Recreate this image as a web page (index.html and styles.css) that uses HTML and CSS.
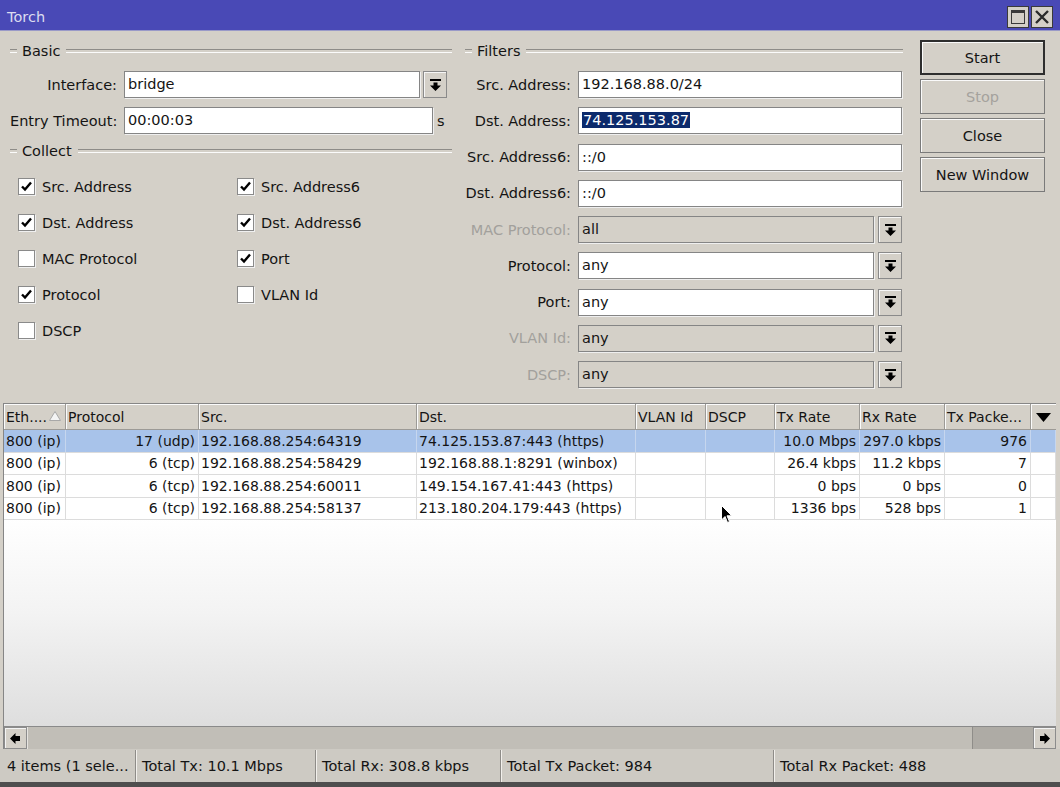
FILE: index.html
```html
<!DOCTYPE html>
<html>
<head>
<meta charset="utf-8">
<title>Torch</title>
<link rel="stylesheet" href="styles.css">
</head>
<body>
<div class="window">
  <div class="titlebar">
    <span class="title">Torch</span>
    <div class="tb-btns">
      <span class="tb-btn"><span class="max-box"></span></span>
      <span class="tb-btn"><svg width="16" height="16" viewBox="0 0 16 16"><path d="M2 2 L14 14 M14 2 L2 14" stroke="#2a2a2a" stroke-width="2.4" fill="none"/></svg></span>
    </div>
  </div>

  <div class="top">
    <div class="col-basic">
      <div class="group-head"><span class="gh-text">Basic</span></div>
      <div class="frow">
        <label class="lbl">Interface:</label>
        <div class="input w-iface">bridge</div>
        <div class="dd"><svg width="11" height="12" viewBox="0 0 11 12"><rect x="0" y="0" width="11" height="2" fill="#000"/><polygon points="3.5,3.5 7.5,3.5 7.5,6.5 11,6.5 5.5,12 0,6.5 3.5,6.5" fill="#000"/></svg></div>
      </div>
      <div class="frow">
        <label class="lbl">Entry Timeout:</label>
        <div class="input w-timeout">00:00:03</div>
        <span class="unit">s</span>
      </div>
      <div class="group-head collect"><span class="gh-text">Collect</span></div>
      <div class="checks">
        <div class="chk"><span class="box"><svg width="15" height="15" viewBox="0 0 15 15"><polyline points="3,7.5 6,10.5 12,3.5" fill="none" stroke="#000" stroke-width="2.4"/></svg></span>Src. Address</div>
        <div class="chk"><span class="box"><svg width="15" height="15" viewBox="0 0 15 15"><polyline points="3,7.5 6,10.5 12,3.5" fill="none" stroke="#000" stroke-width="2.4"/></svg></span>Src. Address6</div>
        <div class="chk"><span class="box"><svg width="15" height="15" viewBox="0 0 15 15"><polyline points="3,7.5 6,10.5 12,3.5" fill="none" stroke="#000" stroke-width="2.4"/></svg></span>Dst. Address</div>
        <div class="chk"><span class="box"><svg width="15" height="15" viewBox="0 0 15 15"><polyline points="3,7.5 6,10.5 12,3.5" fill="none" stroke="#000" stroke-width="2.4"/></svg></span>Dst. Address6</div>
        <div class="chk"><span class="box"></span>MAC Protocol</div>
        <div class="chk"><span class="box"><svg width="15" height="15" viewBox="0 0 15 15"><polyline points="3,7.5 6,10.5 12,3.5" fill="none" stroke="#000" stroke-width="2.4"/></svg></span>Port</div>
        <div class="chk"><span class="box"><svg width="15" height="15" viewBox="0 0 15 15"><polyline points="3,7.5 6,10.5 12,3.5" fill="none" stroke="#000" stroke-width="2.4"/></svg></span>Protocol</div>
        <div class="chk"><span class="box"></span>VLAN Id</div>
        <div class="chk"><span class="box"></span>DSCP</div>
      </div>
    </div>

    <div class="col-filters">
      <div class="group-head"><span class="gh-text">Filters</span></div>
      <div class="frow">
        <label class="lbl">Src. Address:</label>
        <div class="input w-full">192.168.88.0/24</div>
      </div>
      <div class="frow">
        <label class="lbl">Dst. Address:</label>
        <div class="input w-full"><span class="sel">74.125.153.87</span></div>
      </div>
      <div class="frow">
        <label class="lbl">Src. Address6:</label>
        <div class="input w-full">::/0</div>
      </div>
      <div class="frow">
        <label class="lbl">Dst. Address6:</label>
        <div class="input w-full">::/0</div>
      </div>
      <div class="frow">
        <label class="lbl disabled">MAC Protocol:</label>
        <div class="input w-combo off">all</div>
        <div class="dd wide"><svg width="11" height="12" viewBox="0 0 11 12"><rect x="0" y="0" width="11" height="2" fill="#000"/><polygon points="3.5,3.5 7.5,3.5 7.5,6.5 11,6.5 5.5,12 0,6.5 3.5,6.5" fill="#000"/></svg></div>
      </div>
      <div class="frow">
        <label class="lbl">Protocol:</label>
        <div class="input w-combo">any</div>
        <div class="dd wide"><svg width="11" height="12" viewBox="0 0 11 12"><rect x="0" y="0" width="11" height="2" fill="#000"/><polygon points="3.5,3.5 7.5,3.5 7.5,6.5 11,6.5 5.5,12 0,6.5 3.5,6.5" fill="#000"/></svg></div>
      </div>
      <div class="frow">
        <label class="lbl">Port:</label>
        <div class="input w-combo">any</div>
        <div class="dd wide"><svg width="11" height="12" viewBox="0 0 11 12"><rect x="0" y="0" width="11" height="2" fill="#000"/><polygon points="3.5,3.5 7.5,3.5 7.5,6.5 11,6.5 5.5,12 0,6.5 3.5,6.5" fill="#000"/></svg></div>
      </div>
      <div class="frow">
        <label class="lbl disabled">VLAN Id:</label>
        <div class="input w-combo off">any</div>
        <div class="dd wide"><svg width="11" height="12" viewBox="0 0 11 12"><rect x="0" y="0" width="11" height="2" fill="#000"/><polygon points="3.5,3.5 7.5,3.5 7.5,6.5 11,6.5 5.5,12 0,6.5 3.5,6.5" fill="#000"/></svg></div>
      </div>
      <div class="frow">
        <label class="lbl disabled">DSCP:</label>
        <div class="input w-combo off">any</div>
        <div class="dd wide"><svg width="11" height="12" viewBox="0 0 11 12"><rect x="0" y="0" width="11" height="2" fill="#000"/><polygon points="3.5,3.5 7.5,3.5 7.5,6.5 11,6.5 5.5,12 0,6.5 3.5,6.5" fill="#000"/></svg></div>
      </div>
    </div>

    <div class="col-buttons">
      <div class="btn default">Start</div>
      <div class="btn disabled">Stop</div>
      <div class="btn">Close</div>
      <div class="btn">New Window</div>
    </div>
  </div>

  <div class="grid-frame">
    <div class="grid-body">
      <table class="grid">
        <colgroup>
          <col class="c-eth"><col class="c-proto"><col class="c-src"><col class="c-dst"><col class="c-vlan"><col class="c-dscp"><col class="c-tx"><col class="c-rx"><col class="c-txp"><col class="c-menu">
        </colgroup>
        <thead>
          <tr>
            <th>Eth....<svg class="sort" width="12" height="10" viewBox="0 0 12 10"><polygon points="6,0.5 11.5,9.5 0.5,9.5" fill="#f4f4f4" stroke="#a8a8a8" stroke-width="1"/></svg></th>
            <th>Protocol</th>
            <th>Src.</th>
            <th>Dst.</th>
            <th>VLAN Id</th>
            <th>DSCP</th>
            <th>Tx Rate</th>
            <th>Rx Rate</th>
            <th>Tx Packe...</th>
            <th class="menu"><svg width="15" height="9" viewBox="0 0 15 9"><polygon points="0,0 15,0 7.5,9" fill="#000"/></svg></th>
          </tr>
        </thead>
        <tbody>
          <tr class="selected">
            <td>800 (ip)</td><td class="r">17 (udp)</td><td>192.168.88.254:64319</td><td>74.125.153.87:443 (https)</td><td></td><td></td><td class="r">10.0 Mbps</td><td class="r">297.0 kbps</td><td class="r">976</td><td></td>
          </tr>
          <tr>
            <td>800 (ip)</td><td class="r">6 (tcp)</td><td>192.168.88.254:58429</td><td>192.168.88.1:8291 (winbox)</td><td></td><td></td><td class="r">26.4 kbps</td><td class="r">11.2 kbps</td><td class="r">7</td><td></td>
          </tr>
          <tr>
            <td>800 (ip)</td><td class="r">6 (tcp)</td><td>192.168.88.254:60011</td><td>149.154.167.41:443 (https)</td><td></td><td></td><td class="r">0 bps</td><td class="r">0 bps</td><td class="r">0</td><td></td>
          </tr>
          <tr>
            <td>800 (ip)</td><td class="r">6 (tcp)</td><td>192.168.88.254:58137</td><td>213.180.204.179:443 (https)</td><td></td><td></td><td class="r">1336 bps</td><td class="r">528 bps</td><td class="r">1</td><td></td>
          </tr>
        </tbody>
      </table>
    </div>
    <div class="hscroll">
      <div class="sb-btn"><svg width="11" height="11" viewBox="0 0 11 11"><polygon points="0,5.5 5.5,0 5.5,3 10,3 10,8 5.5,8 5.5,11" fill="#000"/></svg></div>
      <div class="sb-thumb"></div>
      <div class="sb-track"></div>
      <div class="sb-btn"><svg width="11" height="11" viewBox="0 0 11 11"><polygon points="11,5.5 5.5,0 5.5,3 1,3 1,8 5.5,8 5.5,11" fill="#000"/></svg></div>
    </div>
  </div>

  <div class="status">
    <div class="st st1">4 items (1 sele...</div>
    <div class="st st2">Total Tx: 10.1 Mbps</div>
    <div class="st st3">Total Rx: 308.8 kbps</div>
    <div class="st st4">Total Tx Packet: 984</div>
    <div class="st st5">Total Rx Packet: 488</div>
  </div>

  <svg class="cursor" width="12" height="19" viewBox="0 0 12 19"><path d="M0.5 0.5 L0.5 15 L4 11.5 L6.5 17.5 L8.5 16.6 L6 10.8 L10.8 10.8 Z" fill="#000" stroke="#fff" stroke-width="1"/></svg>
</div>
</body>
</html>
```

FILE: styles.css
```css
* { box-sizing: border-box; }
html, body { margin: 0; padding: 0; }
body {
  width: 1060px;
  height: 787px;
  overflow: hidden;
  background: #d4d0c8;
  font-family: "DejaVu Sans", Verdana, sans-serif;
  font-size: 14.5px;
  color: #141414;
}
.window {
  position: relative;
  width: 1060px;
  height: 787px;
  display: flex;
  flex-direction: column;
  background: #d4d0c8;
  border-bottom: 5px solid #4e4e4e;
}

/* title bar */
.titlebar {
  flex: none;
  height: 31px;
  background: #4949b6;
  display: flex;
  align-items: center;
  justify-content: space-between;
  padding: 4px 7px 0 7px;
  border-bottom: 1px solid #9a9ac8;
}
.title { color: #dcdcf0; font-size: 14.5px; }
.tb-btns { display: flex; gap: 2px; }
.tb-btn {
  width: 22px;
  height: 22px;
  background: #d4d0c8;
  border: 1px solid #3a3a3a;
  display: flex;
  align-items: center;
  justify-content: center;
}
.max-box {
  width: 14px;
  height: 14px;
  border: 1.5px solid #3a3a3a;
  border-top-width: 3px;
}

/* top form area */
.top {
  flex: none;
  height: 372px;
  display: flex;
  padding-top: 10px;
}
.col-basic { width: 455px; padding: 0 3px 0 10px; }
.col-filters { width: 450px; padding: 0 2px 0 10px; }
.col-buttons {
  padding-left: 15px;
  margin-top: -1px;
  display: flex;
  flex-direction: column;
  gap: 4px;
}

.group-head {
  display: flex;
  align-items: center;
  height: 20px;
  margin-bottom: 10px;
}
.group-head::before,
.group-head::after {
  content: "";
  height: 2px;
  border-top: 1px solid #8e8c88;
  border-bottom: 1px solid #fbfbfb;
}
.group-head::before { width: 7px; }
.group-head::after { flex: 1; }
.gh-text { padding: 0 6px 0 5px; }
.group-head.collect { margin-top: -3px; margin-bottom: 8px; }

.frow {
  display: flex;
  align-items: center;
  height: 27px;
  margin-bottom: 9.25px;
}
.col-basic .lbl { width: 107px; }
.col-filters .lbl { width: 106px; }
.lbl {
  text-align: right;
  margin-right: 7px;
  white-space: nowrap;
}
.lbl.disabled { color: #a2a09c; }

.input {
  height: 27px;
  background: #fff;
  border: 1px solid #858585;
  box-shadow: 1px 1px 0 #efefef;
  padding-left: 3px;
  line-height: 25px;
  white-space: nowrap;
}
.input.off { background: #d4d0c8; }
.w-iface { width: 296px; }
.w-timeout { width: 309px; }
.w-full { width: 324px; }
.w-combo { width: 296px; }
.unit { margin-left: 4px; }
.sel { background: #0c2a6c; color: #fff; padding: 0 1px; }

.dd {
  width: 24px;
  height: 27px;
  margin-left: 3px;
  background: #d4d0c8;
  border: 1px solid #8a8a8a;
  box-shadow: inset 1px 1px 0 #f6f6f6;
  display: flex;
  align-items: center;
  justify-content: center;
}
.dd.wide { margin-left: 4px; }

.checks {
  display: grid;
  grid-template-columns: 219px 1fr;
  padding-left: 8px;
}
.chk {
  height: 36px;
  display: flex;
  align-items: center;
}
.box {
  width: 17px;
  height: 17px;
  background: #fff;
  border: 1px solid #8a8a8a;
  box-shadow: 1px 1px 0 #f0f0f0;
  margin-right: 7px;
  display: flex;
  align-items: center;
  justify-content: center;
}

.btn {
  width: 125px;
  height: 35px;
  background: #d4d0c8;
  border: 1px solid #7a7a7a;
  box-shadow: inset 1px 1px 0 #fafafa;
  display: flex;
  align-items: center;
  justify-content: center;
}
.btn.default { border: 2px solid #2e2e2e; box-shadow: inset 1px 1px 0 #fafafa; }
.btn.disabled { color: #a5a29d; }

/* grid */
.grid-frame {
  flex: 1;
  display: flex;
  flex-direction: column;
  margin: 0 4px 0 3px;
  border-top: 1px solid #868686;
  border-left: 1px solid #868686;
  min-height: 0;
}
.grid-body {
  flex: 1;
  background: linear-gradient(to bottom, #ffffff 0%, #ffffff 35%, #f3f3f3 65%, #dedede 100%);
  overflow: hidden;
}
.grid {
  width: 100%;
  table-layout: fixed;
  border-collapse: separate;
  border-spacing: 0;
  font-size: 14px;
}
.c-eth { width: 62px; }
.c-proto { width: 133px; }
.c-src { width: 218px; }
.c-dst { width: 219px; }
.c-vlan { width: 70px; }
.c-dscp { width: 69px; }
.c-tx { width: 85px; }
.c-rx { width: 85px; }
.c-txp { width: 86px; }
.c-menu { width: 25px; }
.grid th {
  height: 26px;
  background: #d4d0c8;
  font-weight: normal;
  text-align: left;
  padding: 0 2px;
  border-right: 1px solid #9c9a96;
  border-bottom: 1px solid #9c9a96;
  box-shadow: inset 1px 1px 0 #fbfbfb;
  white-space: nowrap;
  overflow: hidden;
}
.grid th .sort { margin-left: 2px; vertical-align: 1px; }
.grid th.menu { text-align: center; padding: 0; border-right: none; }
.grid th.menu svg { vertical-align: middle; }
.grid td {
  height: 22.5px;
  background: #fff;
  padding: 0 3px 0 2px;
  border-right: 1px solid #dcdcdc;
  border-bottom: 1px solid #dcdcdc;
  white-space: nowrap;
  overflow: hidden;
}
.grid td.r { text-align: right; }
.grid tr.selected td { background: #a8c3ea; border-right-color: #c6d6ee; }

.hscroll {
  flex: none;
  height: 23px;
  display: flex;
  border-top: 1px solid #8a8a8a;
  background: #bfbcb5;
}
.sb-btn {
  width: 23px;
  background: #d4d0c8;
  border: 1px solid #8c8c8c;
  box-shadow: inset 1px 1px 0 #f4f4f4;
  display: flex;
  align-items: center;
  justify-content: center;
}
.sb-thumb {
  width: 946px;
  background: #c1beb7;
  border-left: 1px solid #e6e4e0;
  border-right: 1px solid #8f8d89;
}
.sb-track { flex: 1; background: #aeaba5; }

/* status bar */
.status {
  flex: none;
  height: 33px;
  display: flex;
  padding: 1px 4px 0 4px;
  background: #cdcac3;
}
.st {
  display: flex;
  align-items: center;
  padding-left: 3px;
  border-right: 1px solid #8e8c88;
  box-shadow: 1px 0 0 #f2f0ec;
  white-space: nowrap;
}
.st1 { width: 132px; }
.st2 { width: 180px; padding-left: 6px; }
.st3 { width: 185px; padding-left: 6px; }
.st4 { width: 273px; padding-left: 6px; }
.st5 { flex: 1; padding-left: 6px; border-right: none; box-shadow: none; }

.cursor { position: absolute; left: 721px; top: 505px; }
```
